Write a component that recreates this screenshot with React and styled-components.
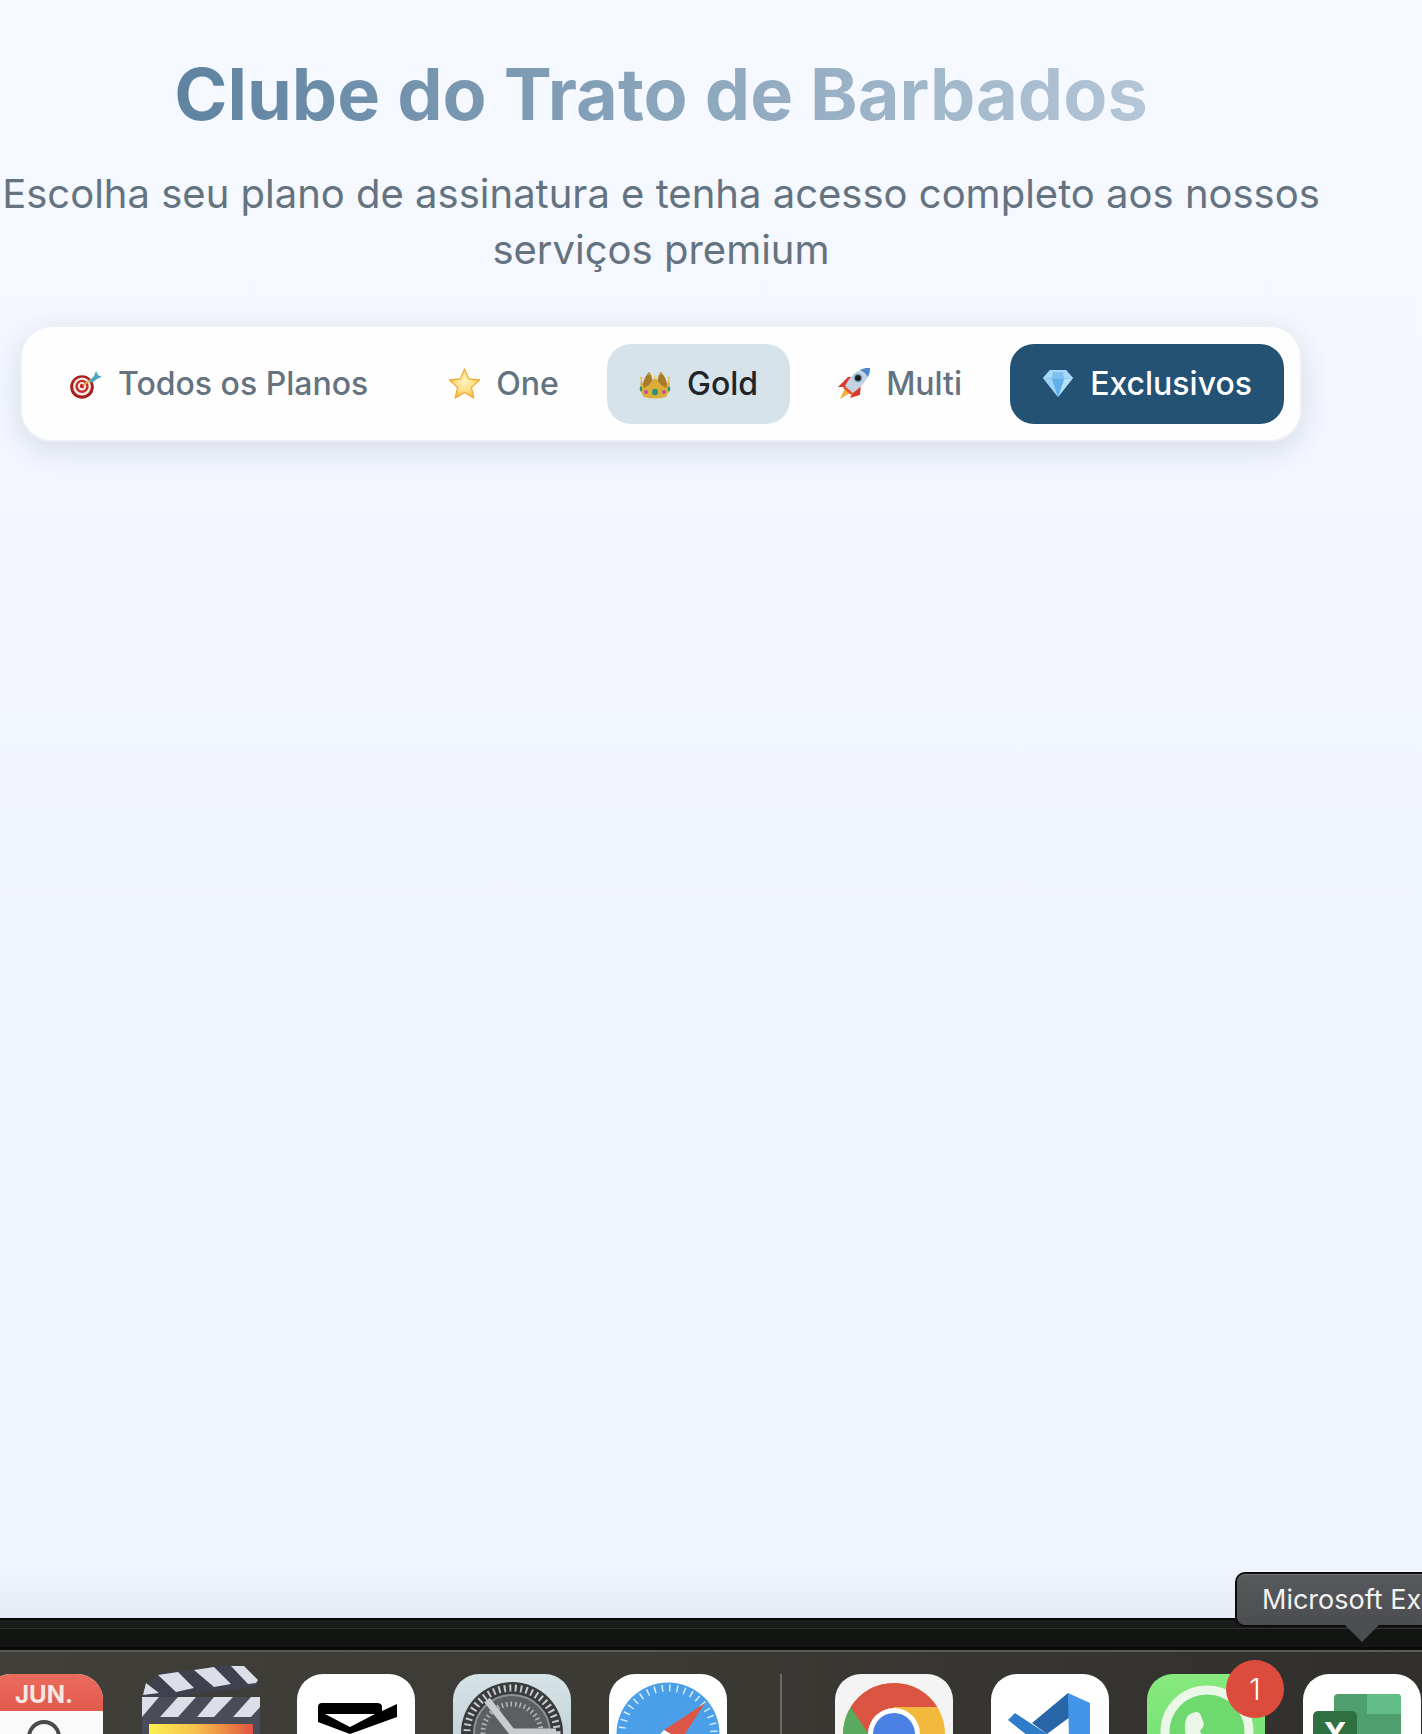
import React from "react";
import styled, { createGlobalStyle } from "styled-components";

const Global = createGlobalStyle`
  html, body { margin: 0; padding: 0; }
  body { font-family: Inter, "Liberation Sans", sans-serif; background: #f3f7fe; }
  * { box-sizing: border-box; }
`;

const Page = styled.div`
  width: 1422px; height: 1734px; overflow: hidden; position: relative;
  display: flex; flex-direction: column;
`;
const Main = styled.main`
  height: 1618px; flex: none;
  background: linear-gradient(180deg, #f6f9ff 0%, #f1f5fe 60%, #f1f5fe 96.5%, #e6eaf5 100%);
`;
const Column = styled.div`
  width: 1322px; display: flex; flex-direction: column; align-items: center;
`;
const Title = styled.h1`
  margin: 50px 0 0; font-size: 72px; line-height: 88px; font-weight: 700;
  background: linear-gradient(90deg, #5f83a0 0%, #b4c6d7 100%);
  -webkit-background-clip: text; background-clip: text; color: transparent;
  white-space: nowrap;
`;
const Sub = styled.p`
  margin: 28px 0 0; font-size: 40px; line-height: 56px; color: #64737f; text-align: center; font-weight: 400;
  white-space: nowrap;
`;
const Bar = styled.nav`
  margin-top: 47px; width: 1282px; height: 117px; background: #fefeff; border-radius: 32px;
  border: 2px solid #edf0f6; box-shadow: 0 8px 32px rgba(40, 60, 90, 0.15);
  display: flex; align-items: center; justify-content: space-between; padding: 0 16px;
`;
const Tab = styled.div`
  height: 80px; border-radius: 24px; display: flex; align-items: center; gap: 16px; padding: 0 32px;
  font-size: 32px; font-weight: 500;
  color: ${p => (p.$v === "active" ? "#fff" : p.$v === "hover" ? "#212529" : "#64737f")};
  background: ${p => (p.$v === "active" ? "#235274" : p.$v === "hover" ? "#d6e3eb" : "transparent")};
`;
const Emoji = styled.svg`width: 32px; height: 32px; flex: none;`;

const Target = () => (
  <Emoji viewBox="0 0 32 32">
    <circle cx="12" cy="19" r="11.8" fill="#a81f1c" />
    <circle cx="12" cy="18.6" r="9" fill="#f4ece8" />
    <circle cx="12" cy="18.4" r="6.6" fill="#c72b26" />
    <circle cx="12" cy="18.2" r="4.2" fill="#f4ece8" />
    <circle cx="12" cy="18" r="2.2" fill="#c72b26" />
    <path d="M13 17 L21 12" stroke="#d6b24a" strokeWidth="1.8" />
    <path d="M19 13 L24 8 L26 3 L28 7 L32 9 L27 11 L22 15 Z" fill="#4ea9b8" />
  </Emoji>
);
const Star = () => (
  <Emoji viewBox="0 0 32 32">
    <defs>
      <radialGradient id="star" cx="0.5" cy="0.42" r="0.62">
        <stop offset="0" stopColor="#fff4c2" />
        <stop offset="0.55" stopColor="#fedf85" />
        <stop offset="1" stopColor="#f6b63a" />
      </radialGradient>
    </defs>
    <path d="M16.5 1 L20.8 11 L31.5 12 L23.4 19.4 L25.8 30 L16.5 24.4 L7.2 30 L9.6 19.4 L1.5 12 L12.2 11 Z" fill="url(#star)" stroke="#f0ad34" strokeWidth="1.3" strokeLinejoin="round" />
  </Emoji>
);
const Crown = () => (
  <Emoji viewBox="0 0 32 32">
    <path d="M4 22 Q3 14 7 8 Q10 3 12 7 L14 14 L18 14 L20 7 Q22 3 25 8 Q29 14 28 22 Z" fill="#a97b2b" />
    <path d="M2 10 L5 20 L10 17 L16 9 L22 17 L27 20 L30 10 L31 22 L27 29 Q16 32 5 29 L1 22 Z" fill="#dcae3a" />
    <circle cx="2" cy="10" r="1.3" fill="#e6c04f" /><circle cx="30" cy="10" r="1.3" fill="#e6c04f" />
    <circle cx="10" cy="5.5" r="1.5" fill="#c4993a" /><circle cx="22" cy="5.5" r="1.5" fill="#c4993a" />
    <circle cx="16" cy="9" r="1.8" fill="#f3dc72" />
    <ellipse cx="16" cy="24" rx="3" ry="3.2" fill="#2f9275" />
    <circle cx="7" cy="24" r="2" fill="#c04fa0" /><circle cx="25" cy="24" r="2" fill="#c04fa0" />
    <ellipse cx="2" cy="21" rx="1.3" ry="2.4" fill="#2f9275" /><ellipse cx="30" cy="21" rx="1.3" ry="2.4" fill="#2f9275" />
  </Emoji>
);
const Rocket = () => (
  <Emoji viewBox="0 0 32 32">
    <path d="M2 31 L7 20 L12 25 Z" fill="#f5b13c" />
    <path d="M0 19 L10 9 L17 9 L8 19 Z" fill="#d9392b" />
    <path d="M12 30 L22 27 L23 15 L15 24 Z" fill="#d9392b" />
    <path d="M7 18 Q13 6 22 2 Q29 -1 32 0 Q32 5 30 9 Q25 18 15 25 Z" fill="#c4d3e0" />
    <path d="M22 2 Q29 -1 32 0 Q32 5 30 9 Q27 4 22 2 Z" fill="#4e88c9" />
    <path d="M7 18 L15 25 L13 27 L5 20 Z" fill="#e05a3a" />
    <circle cx="20" cy="10" r="4.4" fill="#7fa4c4" />
    <circle cx="20" cy="10" r="3" fill="#1e1e22" />
  </Emoji>
);
const Gem = () => (
  <Emoji viewBox="0 0 32 32">
    <path d="M8 2 L24 2 L31 10 L16 29 L1 10 Z" fill="#79bdf1" />
    <path d="M8 2 L24 2 L31 10 L1 10 Z" fill="#a9d9f8" />
    <path d="M11 4 L21 4 L22 10 L10 10 Z" fill="#7fc0f0" />
    <path d="M1 10 L10 11 L16 29 Z" fill="#9dd4f8" />
    <path d="M31 10 L22 11 L16 29 Z" fill="#b6e0fa" />
    <path d="M10 11 L22 11 L16 29 Z" fill="#63aeec" />
  </Emoji>
);

const Dark = styled.div`
  flex: none; height: 10px; background: #1a1c1a; border-top: 2px solid #050505;
`;
const Strip = styled.div`
  flex: none; height: 22px; background: #131513; border-top: 1px solid #2f312e; border-bottom: 3px solid #0a0a0a;
`;
const Dock = styled.div`
  flex: 1; border-top: 2px solid #5b5a53; overflow: hidden;
  background: linear-gradient(90deg, #403f39 0%, #3a3934 50%, #302f2b 100%);
  display: flex; align-items: flex-start; gap: 38px; padding-top: 22px; padding-left: 0;
`;
const Slot = styled.div`
  flex: none; width: 118px; height: 118px; border-radius: 26px;
  background: ${p => p.$bg}; overflow: hidden;
  &:first-child { margin-left: -15px; }
`;
const ClapperSlot = styled.div`
  flex: none; width: 118px; height: 130px; margin-top: -9px;
`;
const Sep = styled.div`
  flex: none; margin: 0 15px; width: 2px; height: 70px; background: #6b6a65;
`;
const CalHead = styled.div`
  height: 37px; background: linear-gradient(180deg, #eb6c5e, #e15a4c); color: #f8e8e4; font: 700 24px Inter, sans-serif;
  text-align: center; line-height: 41px;
`;
const CalBody = styled.svg`display: block; width: 118px; height: 81px;`;
const Art = styled.svg`display: block; width: 118px; height: 118px;`;
const ClapArt = styled.svg`display: block; width: 120px; height: 130px;`;
const Tip = styled.div`
  position: absolute; left: 1235px; top: 1572px; width: 260px; height: 55px;
  background: linear-gradient(180deg, #58595d, #4c4d51); border: 2px solid #0b0b0b; border-radius: 10px;
  box-shadow: inset 0 1px 0 #77787b;
  color: #f2f2f2; font: 400 27px "Inter", sans-serif; line-height: 51px; padding-left: 25px; white-space: nowrap;
`;
const TipArrow = styled.div`
  position: absolute; left: 1345px; top: 1625px; width: 0; height: 0;
  border-left: 17px solid transparent; border-right: 17px solid transparent; border-top: 17px solid #4c4d51;
`;
const Badge = styled.div`
  position: absolute; left: 1226px; top: 1660px; width: 58px; height: 58px; border-radius: 50%;
  background: #dd4b3c; color: #fff; font: 300 30px Inter, sans-serif; display: flex; align-items: center; justify-content: center;
`;

const Clapper = () => (
  <ClapArt viewBox="0 0 120 130">
    <defs>
      <linearGradient id="fc"><stop offset="0" stopColor="#fbf050" /><stop offset="0.45" stopColor="#f6c04d" /><stop offset="1" stopColor="#e2543f" /></linearGradient>
    </defs>
    <path d="M3 32 Q6 16 20 8 L90 0 Q108 0 117 19 L115 22 L20 33 Z" fill="#3f414e" />
    <path d="M17 10 L37 7 L53 23 L35 27 Z M53 5 L73 2 L90 19 L73 22 Z M90 1 L103 1 L117 15 L115 18 L107 19 Z M2 30 L5 18 L18 28 Z" fill="#dcdfe8" />
    <rect x="1" y="32" width="118" height="98" fill="#4a4c58" />
    <path d="M1 32 L18 32 L1 52 Z M37 32 L55 32 L37 52 L19 52 Z M73 32 L92 32 L73 52 L56 52 Z M110 32 L119 32 L119 42 L110 52 L92 52 Z" fill="#dcdfe8" />
    <rect x="8" y="59" width="104" height="71" fill="url(#fc)" />
  </ClapArt>
);

export default function App() {
  return (
    <Page>
      <Global />
      <Main>
        <Column>
          <Title>Clube do Trato de Barbados</Title>
          <Sub>Escolha seu plano de assinatura e tenha acesso completo aos nossos<br />serviços premium</Sub>
          <Bar>
            <Tab><Target />Todos os Planos</Tab>
            <Tab><Star />One</Tab>
            <Tab $v="hover"><Crown />Gold</Tab>
            <Tab><Rocket />Multi</Tab>
            <Tab $v="active"><Gem />Exclusivos</Tab>
          </Bar>
        </Column>
      </Main>
      <Dark />
      <Strip />
      <Dock>
        <Slot $bg="#fafafa">
          <CalHead>JUN.</CalHead>
          <CalBody viewBox="0 0 118 81"><circle cx="59" cy="26" r="15" fill="none" stroke="#4a4a4a" strokeWidth="4" /></CalBody>
        </Slot>
        <ClapperSlot><Clapper /></ClapperSlot>
        <Slot $bg="#fff">
          <Art viewBox="0 0 118 118"><path d="M21 33 Q21 29 25 29 L80 29 Q85 29 85 33 L85 37 L100 30 L100 43 L53 60 L21 48 Z M28 40 L53 53 L78 40 Z" fill="#000" fillRule="evenodd" /></Art>
        </Slot>
        <Slot $bg="linear-gradient(180deg, #d6e4e8, #b6c4c8)">
          <Art viewBox="0 0 118 118">
            <circle cx="59" cy="59" r="51" fill="#3a3b3d" />
            <circle cx="59" cy="59" r="45" fill="none" stroke="#c8cbcd" strokeWidth="7" strokeDasharray="2 3.5" />
            <circle cx="59" cy="59" r="38" fill="#5c5f61" stroke="#8f9294" strokeWidth="2" />
            <circle cx="59" cy="59" r="29" fill="none" stroke="#b5b8ba" strokeWidth="5" strokeDasharray="1.5 3" />
            <path d="M34 26 L59 58 L103 58" fill="none" stroke="#c9ccce" strokeWidth="7" />
          </Art>
        </Slot>
        <Slot $bg="#fff">
          <Art viewBox="0 0 118 118">
            <circle cx="59" cy="60" r="51.5" fill="#4a9fe8" />
            <circle cx="59" cy="60" r="46" fill="none" stroke="#d8ecfb" strokeWidth="7" strokeDasharray="1.5 6" />
            <path d="M96 29 L55 56 L72 66 Z" fill="#dd5547" />
            <path d="M55 56 L22 92 L72 66 Z" fill="#fff" />
          </Art>
        </Slot>
        <Sep />
        <Slot $bg="#f4f4f4">
          <Art viewBox="0 0 118 118">
            <circle cx="59" cy="60" r="51" fill="#f2b93c" />
            <path d="M15.7 33 A51 51 0 0 0 40 107.3 L59 60 Z" fill="#5aa95e" />
            <path d="M15.7 33 A51 51 0 0 1 102.3 33 L59 33 L40 70 Z" fill="#da5441" />
            <circle cx="59" cy="60" r="26" fill="#fff" />
            <circle cx="59" cy="60" r="21" fill="#4a80e4" />
          </Art>
        </Slot>
        <Slot $bg="#fff">
          <Art viewBox="0 0 118 118">
            <path d="M24 39 L17 46 L42 66 L56 60 Z" fill="#2f7cc9" />
            <path d="M41 49 L77 19 L79 43 L56 60 Z" fill="#2966a8" />
            <path d="M77 19 L99 29 L99 118 L79 118 Z" fill="#4295e8" />
          </Art>
        </Slot>
        <Slot $bg="linear-gradient(180deg, #86ea7e, #6fdc6f)">
          <Art viewBox="0 0 118 118">
            <circle cx="60" cy="58" r="42" fill="#6dd96f" stroke="#ebf7e7" strokeWidth="9" />
            <path d="M38 50 Q39 39 49 38 Q53 38 54 42 L57 50 Q56 54 53 57 Q57 67 70 73 L76 90 Q36 80 38 50 Z" fill="#ebf7e7" />
          </Art>
        </Slot>
        <Slot $bg="#fff">
          <Art viewBox="0 0 118 118">
            <rect x="31" y="20" width="67" height="98" rx="4" fill="#4f9e6d" />
            <path d="M64 20 L94 20 Q98 20 98 24 L98 40 L64 40 Z" fill="#62bd86" />
            <rect x="10" y="37" width="44" height="81" rx="5" fill="#2f7041" />
            <text x="32" y="72" textAnchor="middle" fill="#fff" fontFamily="Inter" fontWeight="700" fontSize="32">X</text>
          </Art>
        </Slot>
      </Dock>
      <Badge>1</Badge>
      <Tip>Microsoft Excel</Tip>
      <TipArrow />
    </Page>
  );
}
